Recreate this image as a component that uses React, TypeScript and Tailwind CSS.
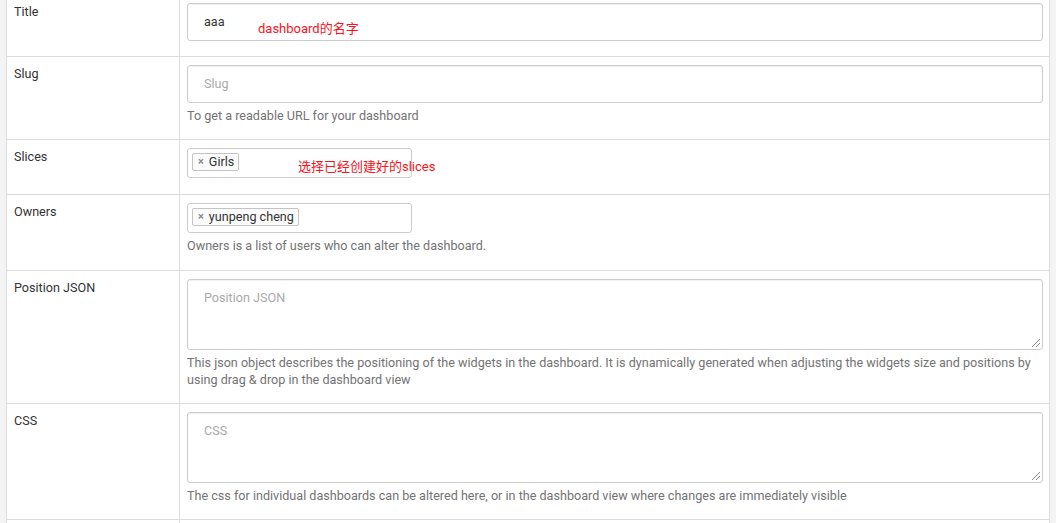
import React from "react";

const font = { fontFamily: "Roboto, 'Noto Sans CJK SC', sans-serif" };

function Tag({ label }: { label: string }) {
  return (
    <span className="inline-flex items-center h-[18px] border border-[#c4c4c4] rounded-[2px] bg-[#fbfbfb] pl-[5px] pr-[4px] text-[12.6px] leading-[16px] text-[#333]">
      <span className="text-[#8a8a8a] text-[11px] font-bold mr-[5px] leading-[16px]">×</span>
      {label}
    </span>
  );
}

function Row({
  label,
  h,
  children,
}: {
  label: string;
  h: string;
  children: React.ReactNode;
}) {
  return (
    <div className={`flex border-b border-[#ddd] ${h}`}>
      <div className="w-[173px] shrink-0 border-r border-[#ddd] pl-[7px] pt-[8px] text-[12.6px] leading-[18px] text-[#333]">
        {label}
      </div>
      <div className="flex-1 pl-[7px] pr-[6px] pt-[8px]">{children}</div>
    </div>
  );
}

function Help({ children }: { children: React.ReactNode }) {
  return (
    <div className="mt-[4px] text-[12.6px] leading-[17px] text-[#737373]">{children}</div>
  );
}

function Resize() {
  return (
    <svg
      className="absolute right-[2px] bottom-[2px]"
      width="9"
      height="9"
      viewBox="0 0 9 9"
    >
      <line x1="1" y1="9" x2="9" y2="1" stroke="#888" strokeWidth="1" />
      <line x1="5" y1="9" x2="9" y2="5" stroke="#888" strokeWidth="1" />
    </svg>
  );
}

export default function App() {
  return (
    <div
      className="w-[1056px] h-[523px] overflow-hidden bg-[#f4f4f4]"
      style={font}
    >
      <div className="ml-[6px] w-[1044px] -mt-[5px] bg-white border-l border-r border-[#ddd]">
        <Row label="Title" h="h-[62px]">
          <div className="relative h-[38px] border border-[#ccc] rounded-[3px] shadow-[inset_0_1px_1px_rgba(0,0,0,0.06)] pl-[16px] pt-[9px] text-[12.6px] leading-[18px] text-[#333]">
            aaa
            <span className="absolute left-[70px] top-[16px] text-[13px] leading-[18px] text-[#f4141e]">
              dashboard的名字
            </span>
          </div>
        </Row>
        <Row label="Slug" h="h-[83px]">
          <div className="h-[38px] border border-[#ccc] rounded-[3px] shadow-[inset_0_1px_1px_rgba(0,0,0,0.06)] pl-[16px] pt-[9px] text-[12.6px] leading-[18px] text-[#a9a9a9]">
            Slug
          </div>
          <Help>To get a readable URL for your dashboard</Help>
        </Row>
        <Row label="Slices" h="h-[55px]">
          <div className="relative flex items-start w-[225px] h-[30px] border border-[#ccc] rounded-[3px] pl-[4px] pt-[4px]">
            <Tag label="Girls" />
            <span className="absolute left-[110px] top-[9px] text-[13px] leading-[18px] text-[#f4141e] whitespace-nowrap">
              选择已经创建好的slices
            </span>
          </div>
        </Row>
        <Row label="Owners" h="h-[76px]">
          <div className="flex items-start w-[225px] h-[30px] border border-[#ccc] rounded-[3px] pl-[4px] pt-[4px]">
            <Tag label="yunpeng cheng" />
          </div>
          <Help>
            <div className="mt-[2px]">Owners is a list of users who can alter the dashboard.</div>
          </Help>
        </Row>
        <Row label="Position JSON" h="h-[133px]">
          <div className="relative h-[71px] border border-[#ccc] rounded-[3px] shadow-[inset_0_1px_1px_rgba(0,0,0,0.06)] pl-[16px] pt-[9px] text-[12.6px] leading-[18px] text-[#a9a9a9]">
            Position JSON
            <Resize />
          </div>
          <Help>
            This json object describes the positioning of the widgets in the dashboard. It is dynamically generated when adjusting the widgets size and positions by using drag &amp; drop in the dashboard view
          </Help>
        </Row>
        <Row label="CSS" h="h-[116px]">
          <div className="relative h-[71px] border border-[#ccc] rounded-[3px] shadow-[inset_0_1px_1px_rgba(0,0,0,0.06)] pl-[16px] pt-[9px] text-[12.6px] leading-[18px] text-[#a9a9a9]">
            CSS
            <Resize />
          </div>
          <Help>
            The css for individual dashboards can be altered here, or in the dashboard view where changes are immediately visible
          </Help>
        </Row>
        <Row label="" h="h-[40px]">
          <div />
        </Row>
      </div>
    </div>
  );
}
